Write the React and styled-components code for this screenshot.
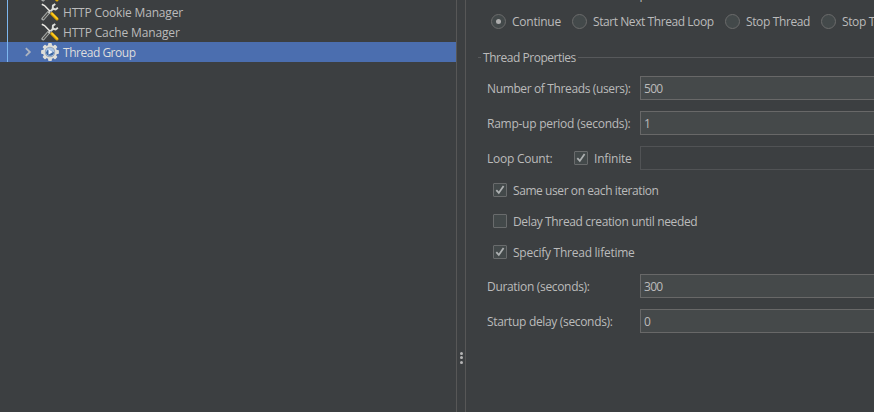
import React from 'react';
import styled, { createGlobalStyle, css } from 'styled-components';

const Global = createGlobalStyle`
  body { margin: 0; background: #3c3f41; overflow: hidden; }
  * { box-sizing: border-box; }
`;

const Window = styled.div`
  display: flex;
  width: 874px;
  height: 412px;
  overflow: hidden;
  background: #3c3f41;
  color: #bbbbbb;
  font: 12px/20px 'Open Sans', 'Noto Sans', sans-serif;
  white-space: nowrap;
`;

const Label = styled.span`
  letter-spacing: ${(p) => p.$track || 0}px;
  margin-top: ${(p) => (p.$flat ? 0 : 2)}px;
`;

const Tree = styled.div`
  flex: none;
  width: 456px;
  display: flex;
  flex-direction: column;
`;

const TreeRow = styled.div`
  flex: none;
  display: flex;
  align-items: center;
  height: 20px;
  ${(p) => p.$clipped && css`
    height: 2px;
    align-items: flex-end;
    overflow: hidden;
  `}
  ${(p) => p.$selected && css`
    background: #4b6eaf;
    color: #dddddd;
  `}
`;

const Guide = styled.div`
  align-self: stretch;
  width: 1px;
  margin-left: 7px;
  background: #7db7ef;
`;

const Toggle = styled.div`
  display: flex;
  width: 32px;
  height: 18px;
  padding-left: 16px;
`;

const TreeIcon = styled.div`
  display: flex;
  width: 23px;
  height: 18px;
  padding-left: 0.5px;
`;

const Divider = styled.div`
  flex: none;
  width: 10px;
  border: solid #575757;
  border-width: 0 1px;
  padding-top: 351.5px;
  display: flex;
  flex-direction: column;
  align-items: center;
  gap: 1.5px;
`;

const Dot = styled.i`
  width: 3px;
  height: 3px;
  border-radius: 50%;
  background: #b5b5b5;
`;

const Panel = styled.div`
  flex: none;
  width: 408px;
  display: flex;
  flex-direction: column;
`;

const Caption = styled.div`
  flex: none;
  display: flex;
  align-items: flex-end;
  height: 2px;
  padding-left: 17px;
  overflow: hidden;
  line-height: 15px;
`;

const Choices = styled.div`
  flex: none;
  display: flex;
  height: 20px;
  margin: 10px 0 15px 25px;
`;

const Choice = styled.div`
  flex: none;
  display: flex;
  align-items: center;
  gap: 6px;
  width: ${(p) => p.$w}px;
`;

const Radio = styled.span`
  flex: none;
  display: flex;
  align-items: center;
  justify-content: center;
  width: 15px;
  height: 15px;
  border: 1px solid #6b6b6b;
  border-radius: 50%;
  background: #43494a;
  margin-top: -1px;
  &::after {
    content: '';
    width: 5px;
    height: 5px;
    border-radius: 50%;
    background: ${(p) => (p.$on ? '#adadad' : 'transparent')};
  }
`;

const Legend = styled.div`
  display: flex;
  align-items: center;
  height: 20px;
  margin: 0 0 9px 12px;
  gap: 2px;
`;

const Rule = styled.i`
  height: 1px;
  margin-top: 1px;
  background: #57595b;
  width: ${(p) => (p.$short ? '3px' : 'auto')};
  flex: ${(p) => (p.$short ? 'none' : 1)};
`;

const Field = styled.div`
  display: flex;
  align-items: center;
  height: 24px;
  margin: 0 0 11px 21px;
`;

const FieldLabel = styled.div`
  flex: none;
  width: ${(p) => p.$w || 153}px;
  padding-top: 2px;
`;

const Input = styled.div`
  flex: 1;
  height: 24px;
  padding-left: 3px;
  line-height: 23px;
  letter-spacing: -0.7px;
  border: 1px solid ${(p) => (p.$disabled ? '#515355' : '#686868')};
  border-right: none;
  background: ${(p) => (p.$disabled ? '#3c3f41' : '#45494a')};
`;

const Options = styled.div`
  display: flex;
  flex-direction: column;
  gap: 11px;
  margin: -1px 0 12px 27px;
`;

const Option = styled.div`
  display: flex;
  align-items: center;
  gap: 6px;
  height: 20px;
  width: ${(p) => (p.$w ? p.$w + 'px' : 'auto')};
`;

const Box = styled.span`
  flex: none;
  display: flex;
  width: 14px;
  height: 14px;
  margin-top: -1px;
  border: 1px solid #696b6c;
  border-radius: 1px;
  background: #43494a;
`;

function Check({ on }) {
  return (
    <Box>
      {on && (
        <svg width="12" height="12" viewBox="0 0 12 12" fill="none">
          <path d="M2.3 6.2 4.8 8.9 9.6 2" stroke="#adb0b1" strokeWidth="1.8" />
        </svg>
      )}
    </Box>
  );
}

function Tools() {
  return (
    <TreeIcon>
      <svg width="18" height="18" viewBox="0 0 18 18" fill="none">
        <path d="M2 15.9 7.5 9.5" stroke="#a9adac" strokeWidth="3.2" strokeLinecap="round" />
        <path d="M2.4 15.5 8 9" stroke="#50504c" strokeWidth="1.3" strokeLinecap="round" />
        <path d="M7.5 10 13 5" stroke="#d5d6d1" strokeWidth="2" />
        <path d="M14.3 1 11.9 2.6 11.7 5.8 14.6 6.4 16.9 4.7" stroke="#dcdedb" strokeWidth="1.9" />
        <path d="M.8 1.2 3.5 2.5 9 8.3" stroke="#ecebe6" strokeWidth="1.5" />
        <path d="M9 8.5 11 10.5" stroke="#767979" strokeWidth="1.6" />
        <path d="M10.8 10.7 16 16" stroke="#dca400" strokeWidth="3" strokeLinecap="round" />
        <path d="M11.2 10.5 16.2 15.5" stroke="#ffce27" strokeWidth="1.5" strokeLinecap="round" />
      </svg>
    </TreeIcon>
  );
}

function Gear() {
  return (
    <TreeIcon>
      <svg width="18" height="18" viewBox="0 0 18 18">
        <g fill="#deded9">
          {[0, 45, 90, 135].map((a) => (
            <rect key={a} x="7.1" y=".1" width="3.8" height="17.8" rx=".9" transform={`rotate(${a} 9 9)`} />
          ))}
          <circle cx="9" cy="9" r="7.1" />
        </g>
        <circle cx="9" cy="9" r="5.2" fill="#8c99ad" />
        <circle cx="9" cy="9" r="4.5" fill="#a9c4e4" />
        <path d="M5 9.5A4.1 4.1 0 0 0 13 9.5L11 8 6.5 7z" fill="#3c67a3" />
        <path d="M7.5 6.2 12 9 7.5 11.8z" fill="#f0f5fc" />
      </svg>
    </TreeIcon>
  );
}

const choices = [
  ['Continue', 81, -0.25, true],
  ['Start Next Thread Loop', 153, -0.43],
  ['Stop Thread', 96, -0.37],
  ['Stop Thread Now', 130, -0.37],
];

const options = [
  ['Same user on each iteration', -0.42, true],
  ['Delay Thread creation until needed', -0.36, false],
  ['Specify Thread lifetime', -0.25, true],
];

function TextField({ label, track, value }) {
  return (
    <Field>
      <FieldLabel><Label $track={track}>{label}</Label></FieldLabel>
      <Input>{value}</Input>
    </Field>
  );
}

export default function App() {
  return (
    <Window>
      <Global />
      <Tree>
        <TreeRow $clipped><Guide /><Toggle /><Tools /></TreeRow>
        <TreeRow><Guide /><Toggle /><Tools /><Label $track={-0.17}>HTTP Cookie Manager</Label></TreeRow>
        <TreeRow><Guide /><Toggle /><Tools /><Label $track={-0.14}>HTTP Cache Manager</Label></TreeRow>
        <TreeRow $selected>
          <Guide />
          <Toggle>
            <svg width="9" height="18" viewBox="0 0 9 18" fill="none">
              <path d="M1.8 5.2 5.8 9 1.8 12.8" stroke="#adb4c0" strokeWidth="1.8" />
            </svg>
          </Toggle>
          <Gear />
          <Label $track={-0.48}>Thread Group</Label>
        </TreeRow>
      </Tree>
      <Divider><Dot /><Dot /><Dot /></Divider>
      <Panel>
        <Caption><Label $flat $track={-0.4}>Action to be taken after a Sampler error</Label></Caption>
        <Choices>
          {choices.map(([name, w, track, on]) => (
            <Choice key={name} $w={w}><Radio $on={on} /><Label $flat $track={track}>{name}</Label></Choice>
          ))}
        </Choices>
        <Legend><Rule $short /><Label $track={-0.47}>Thread Properties</Label><Rule /></Legend>
        <TextField label="Number of Threads (users):" track={-0.37} value="500" />
        <TextField label="Ramp-up period (seconds):" track={-0.26} value="1" />
        <Field>
          <FieldLabel $w={87}><Label $track={-0.25}>Loop Count:</Label></FieldLabel>
          <Option $w={66}><Check on /><Label $track={-0.2}>Infinite</Label></Option>
          <Input $disabled />
        </Field>
        <Options>
          {options.map(([name, track, on]) => (
            <Option key={name}><Check on={on} /><Label $track={track}>{name}</Label></Option>
          ))}
        </Options>
        <TextField label="Duration (seconds):" track={-0.32} value="300" />
        <TextField label="Startup delay (seconds):" track={-0.33} value="0" />
      </Panel>
    </Window>
  );
}
